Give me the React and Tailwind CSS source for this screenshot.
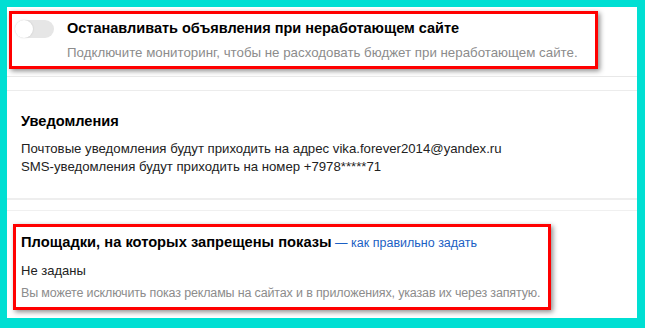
export default function App() {
  return (
    <div
      className="w-[645px] h-[328px] bg-[#00dfd3] pt-[7px] pl-[7px] pr-[8px] pb-[10px]"
      style={{ fontFamily: '"Liberation Sans", Arial, sans-serif' }}
    >
      <div className="h-full bg-white flex flex-col">
        {/* секция: остановка показов */}
        <div className="h-[69px] pt-[4px] pl-[2px]">
          <div className="w-[589px] h-[58px] border-[3px] border-[#ff0000] shadow-[2px_2px_5px_rgba(0,0,0,0.45)] flex items-start pl-[3px] pt-[5px]">
            <div className="w-[39px] h-[18px] rounded-full bg-[#e6e6e6] flex items-center mt-[1px]">
              <div className="w-[18px] h-[18px] rounded-full bg-white shadow-[0_0_2px_rgba(0,0,0,0.15)]" />
            </div>
            <div className="ml-[13px]">
              <div className="text-[14.5px] leading-[18px] font-bold text-black">
                Останавливать объявления при неработающем сайте
              </div>
              <div className="text-[13.3px] leading-[16px] text-[#8c8c8c] mt-[8px]">
                Подключите мониторинг, чтобы не расходовать бюджет при неработающем сайте.
              </div>
            </div>
          </div>
        </div>
        <div className="border-t border-[#e8e8e8] h-[14px]" />
        <div className="border-t border-[#ececec]" />

        {/* уведомления */}
        <div className="h-[107px] pl-[14px] pt-[21px]">
          <div className="text-[14.6px] leading-[18px] font-bold text-black">Уведомления</div>
          <div className="text-[13.2px] leading-[18px] text-[#222] mt-[10px]">
            Почтовые уведомления будут приходить на адрес vika.forever2014@yandex.ru
          </div>
          <div className="text-[13.2px] leading-[18px] text-[#222]">
            SMS-уведомления будут приходить на номер +7978*****71
          </div>
        </div>
        <div className="border-t-2 border-[#eeeeee] h-[12px]" />
        <div className="border-t border-[#f0f0f0]" />

        {/* площадки */}
        <div className="pl-[6px] pt-[13px]">
          <div className="w-[538px] h-[86px] border-[3px] border-[#ff0000] shadow-[2px_2px_5px_rgba(0,0,0,0.45)] pl-[5px] pt-[6px]">
            <div className="text-[14.7px] leading-[18px] text-black whitespace-nowrap">
              <span className="font-bold">Площадки, на которых запрещены показы</span>
              <span className="text-[#1b5fc4] text-[12.5px]"> — как правильно задать</span>
            </div>
            <div className="text-[13px] leading-[16px] text-[#222] mt-[11px]">Не заданы</div>
            <div className="text-[12.5px] tracking-[-0.15px] leading-[16px] text-[#8c8c8c] mt-[6px] whitespace-nowrap">
              Вы можете исключить показ рекламы на сайтах и в приложениях, указав их через запятую.
            </div>
          </div>
        </div>
      </div>
    </div>
  );
}
